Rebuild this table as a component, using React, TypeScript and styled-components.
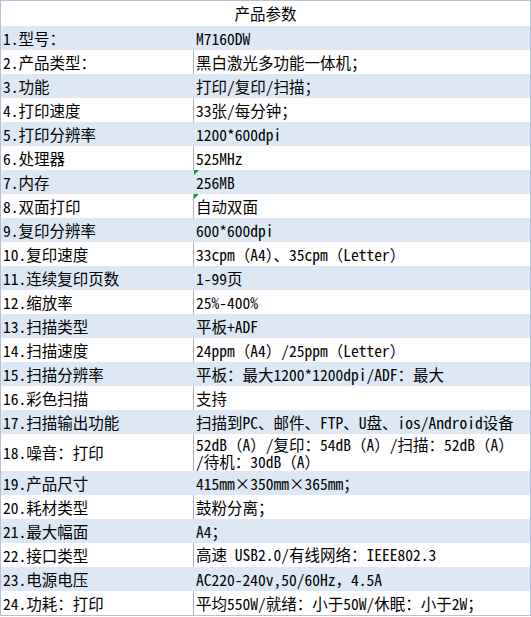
import React from "react";
import styled, { createGlobalStyle } from "styled-components";

interface SpecRow {
    label: string;
    value: string[];
    tall?: boolean;
    marked?: boolean;
    spill?: string;
}

const specs: SpecRow[] = [
    { label: "1.型号：", value: ["M7160DW"] },
    { label: "2.产品类型：", value: ["黑白激光多功能一体机；"] },
    { label: "3.功能", value: ["打印/复印/扫描；"] },
    { label: "4.打印速度", value: ["33张/每分钟；"] },
    { label: "5.打印分辨率", value: ["1200*600dpi"] },
    { label: "6.处理器", value: ["525MHz"] },
    { label: "7.内存", value: ["256MB"], marked: true },
    { label: "8.双面打印", value: ["自动双面"], marked: true },
    { label: "9.复印分辨率", value: ["600*600dpi"] },
    { label: "10.复印速度", value: ["33cpm（A4）、35cpm（Letter）"] },
    { label: "11.连续复印页数", value: ["1-99页"] },
    { label: "12.缩放率", value: ["25%-400%"] },
    { label: "13.扫描类型", value: ["平板+ADF"] },
    { label: "14.扫描速度", value: ["24ppm（A4）/25ppm（Letter）"] },
    { label: "15.扫描分辨率", value: ["平板：最大1200*1200dpi/ADF：最大"] },
    { label: "16.彩色扫描", value: ["支持"] },
    { label: "17.扫描输出功能", value: ["扫描到PC、邮件、FTP、U盘、ios/Android设备"] },
    { label: "18.噪音：打印", value: ["52dB（A）/复印：54dB（A）/扫描：52dB（A）", "/待机：30dB（A）"], tall: true },
    { label: "19.产品尺寸", value: ["415mm×350mm×365mm；"] },
    { label: "20.耗材类型", value: ["鼓粉分离；"] },
    { label: "21.最大幅面", value: ["A4；"] },
    { label: "22.接口类型", value: ["高速 USB2.0/有线网络：IEEE802.3"], spill: "无线" },
    { label: "23.电源电压", value: ["AC220-240v,50/60Hz，4.5A"] },
    { label: "24.功耗：打印", value: ["平均550W/就绪：小于50W/休眠：小于2W；"] },
];

const GlobalStyle = createGlobalStyle`
    body {
        margin: 0;
        background: #fff;
        font-family: "Noto Sans Mono CJK SC", "Noto Sans CJK SC", sans-serif;
        color: #000;
    }
`;

const Table = styled.div`
    width: 531px;
    box-sizing: border-box;
    border: 1px solid #b4c0d6;
    font-size: 15.5px;
    line-height: 17px;
`;

const Header = styled.div`
    height: 25px;
    display: flex;
    align-items: center;
    justify-content: center;
    background: #fff;
`;

const Row = styled.div<{ $shaded: boolean; $tall?: boolean }>`
    display: grid;
    grid-template-columns: 192px 1fr;
    height: ${(p) => (p.$tall ? "37px" : "24px")};
    background: ${(p) => (p.$shaded ? "#dde8f4" : "#fff")};
`;

const Label = styled.div`
    display: flex;
    align-items: center;
    padding-left: 2px;
    white-space: nowrap;
`;

const Value = styled.div<{ $divider: boolean }>`
    position: relative;
    display: flex;
    flex-direction: column;
    justify-content: center;
    padding-left: 2px;
    border-left: 1px solid ${(p) => (p.$divider ? "#a9b3c4" : "transparent")};
    white-space: nowrap;
    overflow: hidden;
`;

// wrapped second line that Excel clips at the bottom of the cell
const SpillValue = styled(Value)`
    justify-content: flex-start;
    padding-top: 3px;
`;

const Spill = styled.span`
    padding-left: 111px;
    margin-top: 3px;
`;

const Marker = styled.span`
    position: absolute;
    top: 0;
    left: 0;
    width: 0;
    height: 0;
    border-top: 5px solid #1f8f3a;
    border-right: 5px solid transparent;
`;

const App: React.FC = () => {
    return (
        <>
            <GlobalStyle />
            <Table>
                <Header>产品参数</Header>
                {specs.map((row, index) => {
                    const shaded = index % 2 === 0;
                    if (row.spill) {
                        return (
                            <Row key={row.label} $shaded={shaded}>
                                <Label>{row.label}</Label>
                                <SpillValue $divider={!shaded}>
                                    <span>{row.value[0]}</span>
                                    <Spill>{row.spill}</Spill>
                                </SpillValue>
                            </Row>
                        );
                    }
                    return (
                        <Row key={row.label} $shaded={shaded} $tall={row.tall}>
                            <Label>{row.label}</Label>
                            <Value $divider={!shaded}>
                                {row.marked && <Marker />}
                                {row.value.map((line) => (
                                    <span key={line}>{line}</span>
                                ))}
                            </Value>
                        </Row>
                    );
                })}
            </Table>
        </>
    );
};

export default App;
